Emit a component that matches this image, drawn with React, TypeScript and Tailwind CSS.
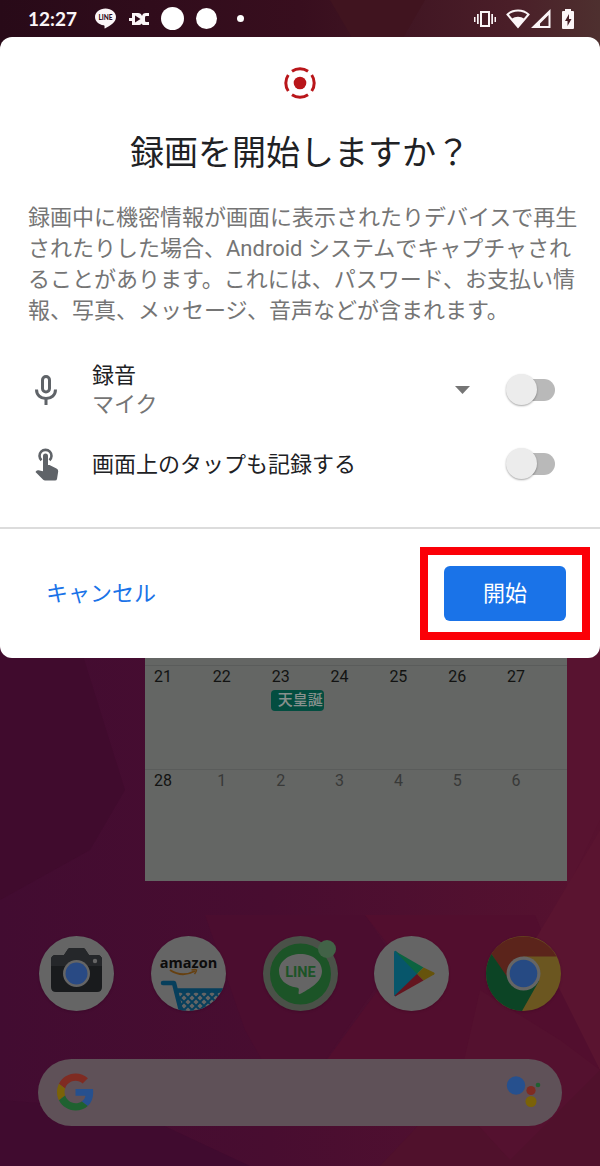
import React, { useState } from 'react';

const NOTO = "font-['Roboto','Noto_Sans_CJK_JP',sans-serif]";

interface CalendarDay {
  day: number;
  nextMonth?: boolean;
  event?: string;
}

const WEEKS: CalendarDay[][] = [
  [
    { day: 21 },
    { day: 22 },
    { day: 23, event: '天皇誕' },
    { day: 24 },
    { day: 25 },
    { day: 26 },
    { day: 27 },
  ],
  [
    { day: 28 },
    { day: 1, nextMonth: true },
    { day: 2, nextMonth: true },
    { day: 3, nextMonth: true },
    { day: 4, nextMonth: true },
    { day: 5, nextMonth: true },
    { day: 6, nextMonth: true },
  ],
];

const Wallpaper: React.FC = () => (
  <svg
    className="absolute inset-0 -z-10 h-full w-full"
    viewBox="0 0 600 1166"
    preserveAspectRatio="none"
    aria-hidden="true"
  >
    <defs>
      <linearGradient id="base" x1="0" y1="0" x2="1" y2="0">
        <stop offset="0" stopColor="#420c31" />
        <stop offset="0.45" stopColor="#480d30" />
        <stop offset="1" stopColor="#57122f" />
      </linearGradient>
      <linearGradient id="top" x1="0" y1="0" x2="1" y2="0">
        <stop offset="0" stopColor="#280a18" />
        <stop offset="0.5" stopColor="#380e1e" />
        <stop offset="0.85" stopColor="#4a1e28" />
        <stop offset="1" stopColor="#4e302f" />
      </linearGradient>
    </defs>
    <rect width="600" height="1166" fill="url(#base)" />
    <rect width="600" height="60" fill="url(#top)" />
    <polygon points="330,0 425,0 390,60 365,60" fill="#40141f" />
    <polygon points="0,640 78,640 125,790 90,850 0,900" fill="#400b2d" />
    <polygon points="0,1100 130,1110 250,1166 0,1166" fill="#400b2f" />
    <polygon points="205,915 365,915 395,960 290,1110 245,1030" fill="#4b0d2f" />
    <polygon points="365,915 535,915 600,1070 470,1110 290,1110 400,960" fill="#520e2e" />
    <polygon points="567,640 600,640 600,820 567,890" fill="#581330" />
    <polygon points="600,830 600,1070 535,940" fill="#5a1430" />
    <polygon points="480,1060 600,1070 600,1166 380,1166" fill="#50112c" />
    <polygon points="480,990 560,1040 600,1070 510,1160 455,1100" fill="#54112f" />
  </svg>
);

const StatusBar: React.FC = () => (
  <header className="flex h-[37px] items-center justify-between pr-[26px] pl-[28px] text-[#fbf5f7]">
    <div className="flex items-center">
      <time className="w-[67px] font-['Lato',sans-serif] text-[19px] leading-6 font-bold">12:27</time>
      <svg className="h-[21px] w-[21px]" viewBox="0 0 21 21" aria-label="LINE">
        <path d="M10.500 0.500C4.700 0.500 0 4.200 0 9c0 4.300 3.700 7.700 8.700 8.300.9.200 1 .7.800 2.700 0 .5.300.6.800.3C15 17.700 21 14.500 21 9 21 4.200 16.300.5 10.500.5z" fill="currentColor" />
        <text x="10.500" y="11.500" textAnchor="middle" fontFamily="Lato" fontWeight="900" fontSize="6.500" fill="#2f0b1b">LINE</text>
      </svg>
      <svg className="ml-[13px] h-[14px] w-[21px]" viewBox="0 0 21 14" aria-hidden="true">
        <path fill="currentColor" d="M3 1h6c2 0 3.500 1 4 3 .5-2 1.500-3 4-3h3v3h-3c-1 0-1 1-1 3s0 3 1 3h3v3h-5c-1 0-2-.5-2.500-1.500C12 12.500 11 13 9 13H3V9H0V6h3z" />
        <path fill="#2f0b1b" d="M6 3.500l5.500 3.500L6 10.500z" />
      </svg>
      <span className="ml-[11px] h-[23px] w-[23px] rounded-full bg-white" />
      <span className="ml-[12px] h-[21px] w-[21px] rounded-full bg-white" />
      <span className="ml-[20px] h-[7px] w-[7px] rounded-full bg-white" />
    </div>
    <div className="flex items-center">
      <svg className="h-[18px] w-[22px]" viewBox="0 0 22 18" fill="currentColor" aria-hidden="true">
        <rect x="7" y="2" width="8" height="14" fill="none" stroke="currentColor" strokeWidth="2" />
        <path d="M0 7h1.500v5H0zM3 4h1.700v10H3zM17.300 4H19v10h-1.700zM20.500 7H22v5h-1.500z" />
      </svg>
      <svg className="ml-[10px] h-[20px] w-[24px]" viewBox="0 0 24 20" aria-hidden="true">
        <path d="M1.500 5.500C7 .2 17 .2 22.500 5.500L12 18z" fill="none" stroke="currentColor" strokeWidth="2" />
        <path d="M5.500 10c4-3 9-3 13 0L12 18.500z" fill="currentColor" />
      </svg>
      <svg className="ml-[1px] h-[20px] w-[20px]" viewBox="0 0 20 20" aria-hidden="true">
        <path fillRule="evenodd" d="M0 19L19.500 0v19zM9 17h8.500V6L9 14.500z" fill="currentColor" />
      </svg>
      <svg className="ml-[11px] h-[20px] w-[12px]" viewBox="0 0 12 20" aria-hidden="true">
        <path d="M3 0h6v2h2q1 0 1 1v16q0 1-1 1H1q-1 0-1-1V3q0-1 1-1h2z" fill="currentColor" />
        <path d="M7 5L3 12h2.500v5L9.500 10H7z" fill="#461e26" />
      </svg>
    </div>
  </header>
);

const RecordIcon: React.FC = () => (
  <svg className="h-8 w-8" viewBox="0 0 32 32" aria-hidden="true">
    <circle cx="16" cy="16" r="6.300" fill="#b9161a" />
    <circle
      cx="16"
      cy="16"
      r="14.200"
      fill="none"
      stroke="#b9161a"
      strokeWidth="3"
      pathLength="360"
      strokeDasharray="69 21"
      strokeDashoffset="34.500"
    />
  </svg>
);

const MicIcon: React.FC = () => (
  <svg className="h-9 w-9" viewBox="0 0 36 36" fill="none" stroke="#5f6368" strokeWidth="3" aria-hidden="true">
    <rect x="14.500" y="4.500" width="7" height="15.500" rx="3.500" />
    <path d="M8.500 17.500c0 5.500 4 9 9.500 9s9.500-3.500 9.500-9M18 26.500V33" />
  </svg>
);

const TapIcon: React.FC = () => (
  <svg className="h-9 w-9" viewBox="0 0 36 36" aria-hidden="true">
    <path d="M13.500 14.300a6 6 0 1 1 8 0" fill="none" stroke="#5f6368" strokeWidth="2.600" />
    <path
      d="M15 10a2.500 2.500 0 0 1 5 0v9h1.500l7 3.500q2 1 1.700 3l-1.200 7.500q-.3 1.500-2 1.500H17q-1 0-1.800-.8L7.500 26l1-1.200q.8-.8 2-.5L15 25.300z"
      fill="#5f6368"
    />
  </svg>
);

interface SwitchProps {
  id: string;
  checked: boolean;
  onChange: (checked: boolean) => void;
  label: string;
}

const Switch: React.FC<SwitchProps> = ({ id, checked, onChange, label }) => (
  <input
    id={id}
    type="checkbox"
    role="switch"
    aria-label={label}
    checked={checked}
    onChange={(e) => onChange(e.target.checked)}
    className="relative h-8 w-[49px] shrink-0 appearance-none before:absolute before:top-[5px] before:right-0 before:left-[3px] before:h-[22px] before:rounded-full before:bg-[#b9b9b9] after:absolute after:top-0 after:left-0 after:h-[31px] after:w-[31px] after:rounded-full after:bg-[#ececec] after:shadow-[0_1px_2px_rgba(0,0,0,0.35)] checked:before:bg-[#8ab4f8] checked:after:left-[18px] checked:after:bg-[#1a73e8]"
  />
);

const RecordDialog: React.FC = () => {
  const [audio, setAudio] = useState(false);
  const [taps, setTaps] = useState(false);
  const [source, setSource] = useState('mic');

  return (
    <section role="dialog" aria-labelledby="dialog-title" className="rounded-xl bg-white">
      <div className="flex flex-col items-center pt-[30px]">
        <RecordIcon />
        <h1 id="dialog-title" className="mt-[29px] text-[34px] leading-[50px] text-[#202124]">
          録画を開始しますか？
        </h1>
      </div>
      <p className="mt-[24px] pr-[20px] pl-[28px] text-[22px] leading-[31px] text-[#757575]">
        録画中に機密情報が画面に表示されたりデバイスで再生されたりした場合、Android
        システムでキャプチャされることがあります。これには、パスワード、お支払い情報、写真、メッセージ、音声などが含まれます。
      </p>

      <div className="mt-[35px] flex h-[58px] items-center pr-[45px] pl-[28px]">
        <MicIcon />
        <div className="ml-[28px] flex flex-1 flex-col">
          <label htmlFor="audio" className="text-[22px] leading-[29px] text-[#202124]">
            録音
          </label>
          <select
            aria-label="音源"
            value={source}
            onChange={(e) => setSource(e.target.value)}
            className="w-full appearance-none bg-transparent text-[22px] leading-[29px] text-[#757575]"
          >
            <option value="mic">マイク</option>
            <option value="device">デバイスの音声</option>
          </select>
        </div>
        <svg className="mr-[36px] h-[8px] w-[15px]" viewBox="0 0 15 8" aria-hidden="true">
          <path d="M0 0h15L7.500 8z" fill="#757575" />
        </svg>
        <Switch id="audio" checked={audio} onChange={setAudio} label="録音" />
      </div>

      <div className="mt-[16px] flex h-[58px] items-center pr-[45px] pl-[28px]">
        <TapIcon />
        <label htmlFor="taps" className="ml-[28px] flex-1 text-[22px] leading-[29px] text-[#202124]">
          画面上のタップも記録する
        </label>
        <Switch id="taps" checked={taps} onChange={setTaps} label="画面上のタップも記録する" />
      </div>

      <div className="mt-[34px] flex items-center justify-between border-t-2 border-[#dcdcdc] py-[37px] pr-[34px] pl-[46px]">
        <button type="button" className="h-[55px] text-[22px] text-[#1a73e8]">
          キャンセル
        </button>
        <div className="relative">
          <button type="button" className="block h-[55px] w-[122px] rounded-md bg-[#1a73e8] text-[22px] text-white">
            開始
          </button>
          <span className="pointer-events-none absolute -inset-x-[24px] -inset-y-[19px] border-8 border-[#fb0007]" />
        </div>
      </div>
    </section>
  );
};

const CalendarWidget: React.FC = () => (
  <div className="mr-[33px] ml-[145px] bg-[#646664] pt-[7px]">
    <table className="w-full table-fixed border-collapse">
      <colgroup>
        <col span={7} />
        <col className="w-[10px]" />
      </colgroup>
      <tbody>
        {WEEKS.map((week) => (
          <tr key={week[0].day} className="h-[104px] border-t border-[#5a5c5b] last:h-[111px]">
            {week.map(({ day, nextMonth, event }) => (
              <td key={day} className="p-0 align-top">
                <div
                  className={`w-9 text-center text-[16px] leading-[22px] ${nextMonth ? 'text-[#383938]' : 'text-[#121312]'}`}
                >
                  {day}
                </div>
                {event && (
                  <div className="mt-[2px] ml-[8px] h-[21px] w-[53px] overflow-hidden rounded-sm bg-[#034d40] pl-[7px] text-[15px] leading-[21px] font-medium whitespace-nowrap text-[#87908d]">
                    {event}
                  </div>
                )}
              </td>
            ))}
            <td />
          </tr>
        ))}
      </tbody>
    </table>
  </div>
);

const CameraIcon: React.FC = () => (
  <svg className="h-full w-full" viewBox="0 0 75 75" aria-hidden="true">
    <circle cx="37.500" cy="37.500" r="37.500" fill="#656565" />
    <path d="M17 19h8l4-6q1-1 2-1h13q1 0 2 1l4 6h8q5 0 5 5v27q0 5-5 5H17q-5 0-5-5V24q0-5 5-5z" fill="#191b1d" />
    <path d="M17 19h8l4-6q1-1 2-1h13q1 0 2 1l4 6h8q5 0 5 5v6H12v-6q0-5 5-5z" fill="#25272a" />
    <circle cx="37.500" cy="37.500" r="13.500" fill="#656565" />
    <circle cx="37.500" cy="37.500" r="11" fill="#294a84" />
    <circle cx="56" cy="25" r="2.200" fill="#656565" />
  </svg>
);

const AmazonIcon: React.FC = () => (
  <svg className="h-full w-full" viewBox="0 0 75 75" aria-hidden="true">
    <defs>
      <clipPath id="amazon-clip">
        <circle cx="37.500" cy="37.500" r="37.500" />
      </clipPath>
      <pattern id="mesh" width="8" height="8" x="29" y="54" patternUnits="userSpaceOnUse">
        <path d="M0 0l8 8M8 0L0 8" stroke="#073f5c" strokeWidth="2" />
      </pattern>
    </defs>
    <g clipPath="url(#amazon-clip)">
      <rect width="75" height="75" fill="#656565" />
      <text x="37.500" y="32" textAnchor="middle" fontFamily="Open Sans" fontWeight="700" fontSize="14.500" fill="#0c0c0c">amazon</text>
      <path d="M19 34q12 8 25 1" fill="none" stroke="#664010" strokeWidth="1.800" />
      <path d="M40.500 34q4-1 5 0-.2 2-2 4" fill="none" stroke="#664010" strokeWidth="1.500" />
      <path d="M27 54h46L66 75H31z" fill="url(#mesh)" />
      <path d="M12 47h11l7 28M25 54.500h50" fill="none" stroke="#073f5c" strokeWidth="4.500" strokeLinecap="round" strokeLinejoin="round" />
    </g>
  </svg>
);

const LineIcon: React.FC = () => (
  <svg className="h-full w-full overflow-visible" viewBox="0 0 75 75" aria-hidden="true">
    <circle cx="37.500" cy="37.500" r="37.500" fill="#4a5148" />
    <circle cx="37.500" cy="38" r="30.500" fill="#1c5427" />
    <path
      d="M37.500 18C25.500 18 16 25.500 16 35c0 8.500 7 15 17.500 16.500 3 .5 2.500 2 2 5.500 0 1.200.8 1.500 2 .8C46 53 59 46.500 59 35c0-9.500-9.500-17-21.500-17z"
      fill="#656565"
    />
    <text x="37.500" y="40.500" textAnchor="middle" fontFamily="Roboto" fontWeight="700" fontSize="14.500" fill="#1c5427">LINE</text>
    <circle cx="64" cy="13" r="9" fill="#426247" />
  </svg>
);

const PlayIcon: React.FC = () => (
  <svg className="h-full w-full" viewBox="0 0 75 75" aria-hidden="true">
    <circle cx="37.500" cy="37.500" r="37.500" fill="#656565" />
    <path d="M20 17q0-3 2-2l22 23-22 22q-2 1-2-2z" fill="#07566b" />
    <path d="M21 15l28.500 16.500L43 38z" fill="#0c6340" />
    <path d="M49.500 31.500L60 36.500q1.500 1 0 2l-10.500 6L43 38z" fill="#66530b" />
    <path d="M43 38l6.500 6.500L22 60q-1 .5-1.500-.3z" fill="#64151f" />
  </svg>
);

const ChromeIcon: React.FC = () => (
  <svg className="h-full w-full" viewBox="0 0 75 75" aria-hidden="true">
    <circle cx="37.500" cy="37.500" r="37.500" fill="#6b5620" />
    <path d="M5.500 18A37.500 37.500 0 0 1 70.500 20.500H37.500L23 46z" fill="#5b241b" />
    <path d="M5.500 18A37.500 37.500 0 0 0 36 75l17-30-29 0z" fill="#0c4425" />
    <circle cx="37.500" cy="37.500" r="17" fill="#656565" />
    <circle cx="37.500" cy="37.500" r="13.800" fill="#264a83" />
  </svg>
);

const DOCK_APPS = [
  { name: 'カメラ', Icon: CameraIcon },
  { name: 'Amazon', Icon: AmazonIcon },
  { name: 'LINE', Icon: LineIcon },
  { name: 'Play ストア', Icon: PlayIcon },
  { name: 'Chrome', Icon: ChromeIcon },
];

const SearchBar: React.FC = () => (
  <div className="mx-[38px] mt-[48px] flex h-[67px] items-center rounded-full bg-[#5f5158] pr-[20px] pl-[19px]">
    <svg className="h-[38px] w-[37px] shrink-0" viewBox="0 0 48 48" aria-hidden="true">
      <path fill="#7f2b22" d="M24 9.500c3.540 0 6.710 1.220 9.210 3.600l6.850-6.850C35.900 2.380 30.470 0 24 0 14.620 0 6.510 5.380 2.560 13.220l7.980 6.190C12.430 13.720 17.740 9.500 24 9.500z" />
      <path fill="#26508e" d="M46.980 24.550c0-1.570-.15-3.090-.38-4.550H24v9.020h12.940c-.58 2.960-2.260 5.480-4.780 7.180l7.730 6c4.510-4.180 7.090-10.360 7.090-17.650z" />
      <path fill="#7b6208" d="M10.530 28.590c-.48-1.450-.76-2.990-.76-4.590s.27-3.140.76-4.590l-7.980-6.190C.92 16.460 0 20.120 0 24c0 3.880.92 7.540 2.560 10.780l7.970-6.190z" />
      <path fill="#1f6130" d="M24 48c6.480 0 11.930-2.130 15.890-5.810l-7.730-6c-2.150 1.450-4.920 2.300-8.160 2.300-6.260 0-11.570-4.220-13.470-9.910l-7.980 6.190C6.510 42.620 14.620 48 24 48z" />
    </svg>
    <input type="search" aria-label="検索" className="min-w-0 flex-1 bg-transparent px-3 text-[16px] text-white outline-none" />
    <button type="button" aria-label="音声アシスタント" className="h-[36px] w-[36px]">
      <svg className="h-full w-full" viewBox="0 0 36 36" aria-hidden="true">
        <circle cx="10" cy="11.500" r="9.200" fill="#26508e" />
        <circle cx="25" cy="16.500" r="4.600" fill="#7f2b22" />
        <circle cx="32" cy="11" r="2.300" fill="#1f6130" />
        <circle cx="25" cy="27.500" r="5.500" fill="#7b6208" />
      </svg>
    </button>
  </div>
);

export default function App() {
  return (
    <main className={`relative isolate min-h-screen overflow-hidden bg-[#420c31] pb-[40px] ${NOTO}`}>
      <Wallpaper />
      <StatusBar />
      <RecordDialog />
      <CalendarWidget />
      <nav className="mt-[55px] flex justify-between px-[39px]">
        {DOCK_APPS.map(({ name, Icon }) => (
          <button key={name} type="button" aria-label={name} className="h-[75px] w-[75px] rounded-full shadow-sm">
            <Icon />
          </button>
        ))}
      </nav>
      <SearchBar />
    </main>
  );
}
